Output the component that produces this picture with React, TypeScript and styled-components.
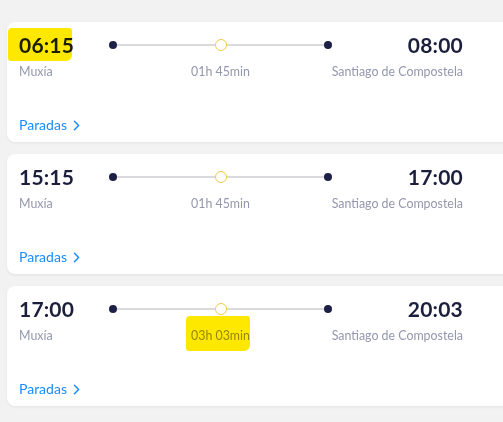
import React from "react";
import styled, { createGlobalStyle } from "styled-components";

const GlobalStyle = createGlobalStyle`
  html, body {
    margin: 0;
    padding: 0;
    background: #f2f2f3;
    overflow: hidden;
  }
  body {
    font-family: Lato, "Open Sans", Arial, sans-serif;
    -webkit-font-smoothing: antialiased;
  }
`;

const List = styled.div`
  display: flex;
  flex-direction: column;
  gap: 12px;
  padding: 22px 0 16px 7px;
  width: 540px;
`;

const Card = styled.div`
  height: 120px;
  box-sizing: border-box;
  background: #ffffff;
  border-radius: 8px;
  box-shadow: 0 1px 3px rgba(20, 24, 60, 0.07);
  padding: 11px 12px 8px 12px;
  display: flex;
  flex-direction: column;
`;

const Trip = styled.div`
  width: 444px;
  display: grid;
  grid-template-columns: 90px 223px 131px;
  grid-template-rows: 24px auto;
  row-gap: 7px;
  align-items: center;
`;

const Time = styled.div<{ $end?: boolean }>`
  font-size: 21px;
  line-height: 24px;
  font-weight: 700;
  color: #1b1f3b;
  letter-spacing: 0.2px;
  white-space: nowrap;
  justify-self: ${(p) => (p.$end ? "end" : "start")};
`;

const Place = styled.div<{ $end?: boolean; $center?: boolean }>`
  font-size: 12.4px;
  line-height: 16px;
  color: #9497ad;
  white-space: nowrap;
  justify-self: ${(p) => (p.$end ? "end" : p.$center ? "center" : "start")};
`;

const Track = styled.div`
  display: flex;
  align-items: center;
  height: 14px;
`;

const Dot = styled.span`
  width: 8px;
  height: 8px;
  border-radius: 50%;
  background: #1c2046;
  flex: none;
`;

const Line = styled.span`
  flex: 1;
  height: 2px;
  background: #d9d9de;
`;

const Stop = styled.span`
  width: 10px;
  height: 10px;
  border-radius: 50%;
  border: 1.5px solid #f7c948;
  background: #ffffff;
  flex: none;
`;

/* marker-pen style highlight laid over text */
const Marker = styled.span<{ $x: number; $y: number; $r: number; $b: number }>`
  position: relative;
  display: inline-block;
  &::after {
    content: "";
    position: absolute;
    left: ${(p) => p.$x}px;
    right: ${(p) => p.$r}px;
    top: ${(p) => p.$y}px;
    bottom: ${(p) => p.$b}px;
    background: #ffe800;
    border-radius: 4px 3px 6px 3px;
    mix-blend-mode: multiply;
    pointer-events: none;
  }
`;

const Stops = styled.a`
  margin-top: auto;
  display: inline-flex;
  align-items: center;
  gap: 6px;
  align-self: flex-start;
  font-size: 14px;
  line-height: 18px;
  color: #1a8cff;
  text-decoration: none;
  cursor: pointer;
`;

type Trip = {
  dep: string;
  arr: string;
  duration: string;
  markDep?: boolean;
  markDuration?: boolean;
};

const trips: Trip[] = [
  { dep: "06:15", arr: "08:00", duration: "01h 45min", markDep: true },
  { dep: "15:15", arr: "17:00", duration: "01h 45min" },
  { dep: "17:00", arr: "20:03", duration: "03h 03min", markDuration: true },
];

const Chevron = () => (
  <svg width="7" height="11" viewBox="0 0 7 11" fill="none">
    <path d="M1.5 1.2 L5.6 5.5 L1.5 9.8" stroke="#1a8cff" strokeWidth="1.5" strokeLinecap="round" strokeLinejoin="round" />
  </svg>
);

export default function App() {
  return (
    <>
      <GlobalStyle />
      <List>
        {trips.map((t) => (
          <Card key={t.dep}>
            <Trip>
              <Time>
                {t.markDep ? (
                  <Marker $x={-11} $y={-5} $r={2} $b={-4}>
                    {t.dep}
                  </Marker>
                ) : (
                  t.dep
                )}
              </Time>
              <Track>
                <Dot />
                <Line />
                <Stop />
                <Line />
                <Dot />
              </Track>
              <Time $end>{t.arr}</Time>
              <Place>Muxía</Place>
              <Place $center>
                {t.markDuration ? (
                  <Marker $x={-5} $y={-12} $r={0} $b={-7}>
                    {t.duration}
                  </Marker>
                ) : (
                  t.duration
                )}
              </Place>
              <Place $end>Santiago de Compostela</Place>
            </Trip>
            <Stops>
              Paradas
              <Chevron />
            </Stops>
          </Card>
        ))}
      </List>
    </>
  );
}
